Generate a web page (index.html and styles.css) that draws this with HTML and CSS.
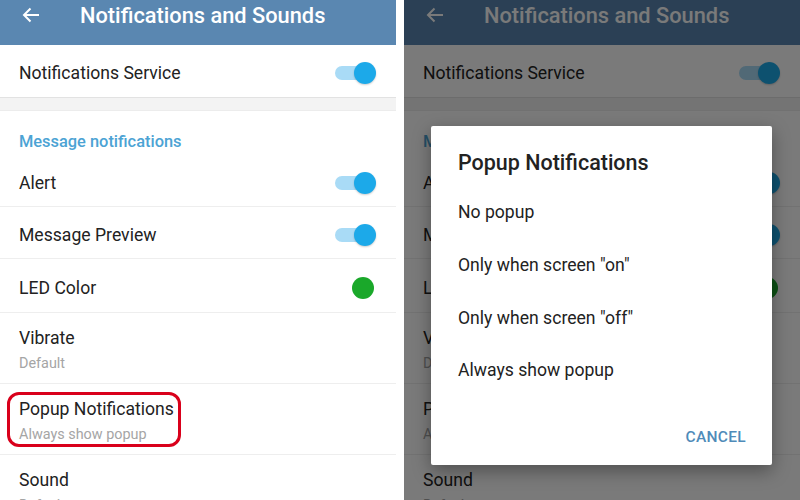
FILE: index.html
```html
<!DOCTYPE html>
<html lang="en">
<head>
    <meta charset="UTF-8">
    <title>Notifications and Sounds</title>
    <link rel="stylesheet" href="styles.css">
</head>
<body>
    <div class="screens">
        <!-- left: settings list with the highlighted row -->
        <div class="screen">
            <div class="toolbar">
                <svg class="back" width="18" height="16" viewBox="0 0 18 16"><path d="M17 8H2M8.5 1.5L2 8l6.5 6.5" fill="none" stroke="#fff" stroke-width="2"/></svg>
                <span class="toolbar-title">Notifications and Sounds</span>
            </div>
            <div class="row row-first">
                <span class="label">Notifications Service</span>
                <span class="switch"><span class="knob"></span></span>
            </div>
            <div class="shadow-gap"></div>
            <div class="section">Message notifications</div>
            <div class="row">
                <span class="label">Alert</span>
                <span class="switch"><span class="knob"></span></span>
            </div>
            <div class="row">
                <span class="label">Message Preview</span>
                <span class="switch"><span class="knob"></span></span>
            </div>
            <div class="row row-led">
                <span class="label">LED Color</span>
                <span class="led"></span>
            </div>
            <div class="row-two">
                <span class="label">Vibrate</span>
                <span class="sub">Default</span>
            </div>
            <div class="row-two marked">
                <span class="label">Popup Notifications</span>
                <span class="sub">Always show popup</span>
                <span class="mark"></span>
            </div>
            <div class="row-two no-border">
                <span class="label">Sound</span>
                <span class="sub">Default</span>
            </div>
        </div>

        <!-- right: same list dimmed, popup dialog on top -->
        <div class="screen">
            <div class="toolbar">
                <svg class="back" width="18" height="16" viewBox="0 0 18 16"><path d="M17 8H2M8.5 1.5L2 8l6.5 6.5" fill="none" stroke="#fff" stroke-width="2"/></svg>
                <span class="toolbar-title">Notifications and Sounds</span>
            </div>
            <div class="row row-first">
                <span class="label">Notifications Service</span>
                <span class="switch"><span class="knob"></span></span>
            </div>
            <div class="shadow-gap"></div>
            <div class="section">Message notifications</div>
            <div class="row">
                <span class="label">Alert</span>
                <span class="switch"><span class="knob"></span></span>
            </div>
            <div class="row">
                <span class="label">Message Preview</span>
                <span class="switch"><span class="knob"></span></span>
            </div>
            <div class="row row-led">
                <span class="label">LED Color</span>
                <span class="led"></span>
            </div>
            <div class="row-two">
                <span class="label">Vibrate</span>
                <span class="sub">Default</span>
            </div>
            <div class="row-two">
                <span class="label">Popup Notifications</span>
                <span class="sub">Always show popup</span>
            </div>
            <div class="row-two no-border">
                <span class="label">Sound</span>
                <span class="sub">Default</span>
            </div>

            <div class="dim"></div>
            <div class="dialog">
                <div class="dialog-title">Popup Notifications</div>
                <div class="option">No popup</div>
                <div class="option">Only when screen "on"</div>
                <div class="option">Only when screen "off"</div>
                <div class="option">Always show popup</div>
                <div class="dialog-actions">
                    <span class="cancel">CANCEL</span>
                </div>
            </div>
        </div>
    </div>
</body>
</html>
```

FILE: styles.css
```css
body {
    margin: 0;
    background: #fff;
    font-family: Roboto, 'Noto Sans', sans-serif;
    color: #222;
    overflow: hidden;
}

.screens {
    display: flex;
    gap: 8px;
    height: 500px;
}

.screen {
    position: relative;
    width: 396px;
    height: 500px;
    overflow: hidden;
    background: #fff;
}

.toolbar {
    height: 45px;
    box-sizing: border-box;
    padding: 0 0 15px 22px;
    display: flex;
    align-items: center;
    background: #5a87b1;
}

.back {
    display: block;
}

.toolbar-title {
    margin-left: 40px;
    color: #fff;
    font-size: 21.8px;
    font-weight: 500;
}

.row {
    height: 47px;
    padding: 4px 23px 0 19px;
    display: flex;
    align-items: center;
    justify-content: space-between;
    border-bottom: 1px solid #eeeeee;
}

.row-first {
    height: 48px;
    border-bottom: 1px solid #e2e2e2;
}

.row-led {
    height: 49px;
}

.label {
    font-size: 17.6px;
    color: #222;
}

.shadow-gap {
    height: 12px;
    background: #f3f3f3;
    border-bottom: 1px solid #ececec;
}

.section {
    height: 44px;
    box-sizing: border-box;
    padding: 21px 19px 0;
    font-size: 16.4px;
    font-weight: 500;
    color: #4ca3d4;
}

.switch {
    position: relative;
    width: 38px;
    height: 14px;
    border-radius: 7px;
    background: #a9dbf6;
}

.knob {
    position: absolute;
    right: -3px;
    top: -4px;
    width: 22px;
    height: 22px;
    border-radius: 50%;
    background: #1ca9e9;
    box-shadow: 0 1px 2px rgba(0, 0, 0, 0.2);
}

.led {
    width: 22px;
    height: 22px;
    margin-right: -1px;
    border-radius: 50%;
    background: #1aa82a;
}

.row-two {
    position: relative;
    height: 71px;
    box-sizing: border-box;
    padding: 15px 19px 0;
    display: flex;
    flex-direction: column;
    gap: 7px;
    border-bottom: 1px solid #eeeeee;
}

.no-border {
    border-bottom: none;
}

.sub {
    font-size: 14.4px;
    color: #a5a5a5;
}

.mark {
    position: absolute;
    left: 7px;
    top: 8px;
    width: 168px;
    height: 49px;
    border: 3px solid #d9001b;
    border-radius: 12px;
}

.dim {
    position: absolute;
    inset: 0;
    background: rgba(0, 0, 0, 0.52);
}

.dialog {
    position: absolute;
    left: 27px;
    top: 126px;
    width: 341px;
    height: 339px;
    box-sizing: border-box;
    padding: 24px 26px 0 27px;
    background: #fff;
    border-radius: 2px;
    box-shadow: 0 6px 18px rgba(0, 0, 0, 0.35);
}

.dialog-title {
    height: 36px;
    font-size: 21.5px;
    font-weight: 500;
    color: #222;
}

.option {
    height: 52.7px;
    display: flex;
    align-items: center;
    font-size: 17.6px;
    color: #222;
}

.dialog-actions {
    margin-top: 31px;
    display: flex;
    justify-content: flex-end;
}

.cancel {
    font-size: 15.5px;
    font-weight: 500;
    color: #4f8bb9;
    letter-spacing: 0.3px;
}
```
